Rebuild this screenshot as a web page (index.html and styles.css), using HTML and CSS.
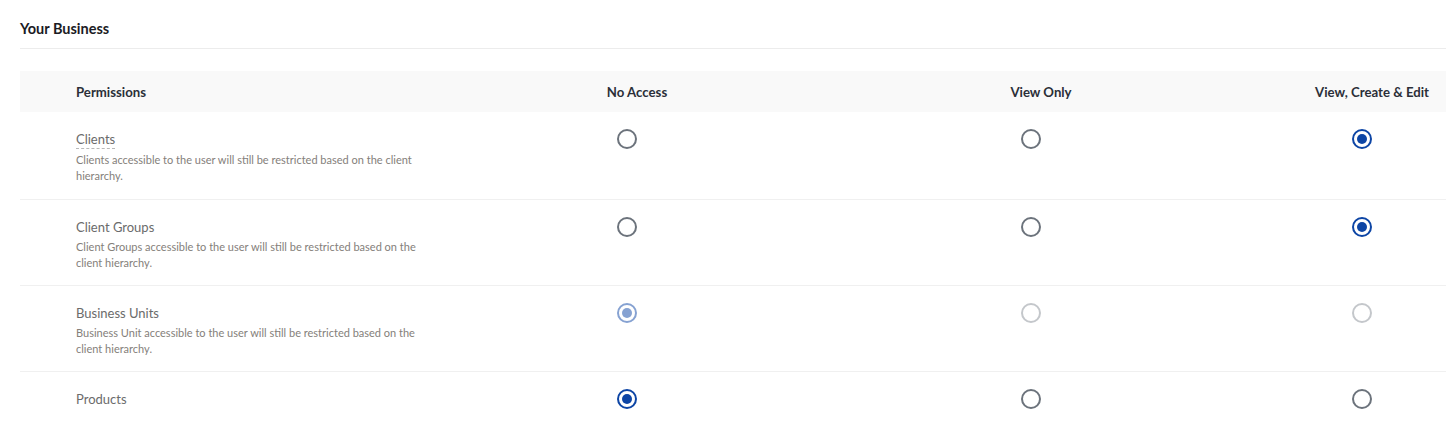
FILE: index.html
```html
<!DOCTYPE html>
<html>
<head>
<meta charset="utf-8">
<link rel="stylesheet" href="styles.css">
</head>
<body>
<div class="page">
  <h2 class="section-title">Your Business</h2>
  <div class="perm-table">
    <div class="row head">
      <div class="cell first">Permissions</div>
      <div class="cell">No Access</div>
      <div class="cell">View Only</div>
      <div class="cell">View, Create &amp; Edit</div>
    </div>
    <div class="row tall">
      <div class="cell first">
        <div class="name dashed">Clients</div>
        <div class="desc">Clients accessible to the user will still be restricted based on the client hierarchy.</div>
      </div>
      <div class="cell"><span class="radio"></span></div>
      <div class="cell"><span class="radio"></span></div>
      <div class="cell"><span class="radio on"></span></div>
    </div>
    <div class="row">
      <div class="cell first">
        <div class="name">Client Groups</div>
        <div class="desc">Client Groups accessible to the user will still be restricted based on the client hierarchy.</div>
      </div>
      <div class="cell"><span class="radio"></span></div>
      <div class="cell"><span class="radio"></span></div>
      <div class="cell"><span class="radio on"></span></div>
    </div>
    <div class="row">
      <div class="cell first">
        <div class="name">Business Units</div>
        <div class="desc">Business Unit accessible to the user will still be restricted based on the client hierarchy.</div>
      </div>
      <div class="cell"><span class="radio on disabled"></span></div>
      <div class="cell"><span class="radio disabled"></span></div>
      <div class="cell"><span class="radio disabled"></span></div>
    </div>
    <div class="row last">
      <div class="cell first">
        <div class="name">Products</div>
      </div>
      <div class="cell"><span class="radio on"></span></div>
      <div class="cell"><span class="radio"></span></div>
      <div class="cell"><span class="radio"></span></div>
    </div>
  </div>
</div>
</body>
</html>
```
FILE: styles.css
```css
* { box-sizing: border-box; }
html, body { margin: 0; padding: 0; background: #fff; }
body { font-family: "Lato", "Open Sans", sans-serif; color: #333; }
.page { padding: 20px 0 0 20px; }
.section-title {
  margin: 0;
  font-size: 14.5px;
  font-weight: 700;
  color: #1b1b24;
  line-height: 18px;
  padding-bottom: 10px;
  border-bottom: 1px solid #ececec;
}
.perm-table { margin-top: 22px; }
.row {
  display: grid;
  grid-template-columns: 470px 294px 514px 148px;
  border-bottom: 1px solid #f0f0f0;
  height: 86px;
}
.row.tall { height: 88px; }
.row.head {
  background: #f9f9f9;
  height: 41px;
  border-bottom: none;
  align-items: center;
}
.row.last { border-bottom: none; }
.head .cell {
  text-align: center;
  font-size: 13.2px;
  font-weight: 700;
  color: #2b2f38;
}
.head .cell.first { text-align: left; }
.cell.first { padding-left: 56px; }
.row:not(.head) .cell { padding-top: 16px; }
.row:not(.head) .cell:not(.first) {
  display: flex;
  justify-content: center;
  padding-right: 20px;
}
.name {
  font-size: 13px;
  color: #6b6b6b;
  line-height: 18px;
  display: inline-block;
}
.name.dashed { border-bottom: 1px dashed #b8b8b8; }
.desc {
  margin-top: 3px;
  font-size: 11px;
  line-height: 16px;
  color: #84807a;
  width: 352px;
}
.radio {
  width: 20px;
  height: 20px;
  margin-top: 1px;
  border-radius: 50%;
  border: 2px solid #6c737c;
  background: #fff;
  position: relative;
  display: block;
}
.radio.on { border-color: #0d45a5; }
.radio.on::after {
  content: "";
  position: absolute;
  left: 3px; top: 3px;
  width: 10px; height: 10px;
  border-radius: 50%;
  background: #0d45a5;
}
.radio.disabled { border-color: #c4c7cb; }
.radio.on.disabled { border-color: #86a2d2; }
.radio.on.disabled::after { background: #86a2d2; }
```
